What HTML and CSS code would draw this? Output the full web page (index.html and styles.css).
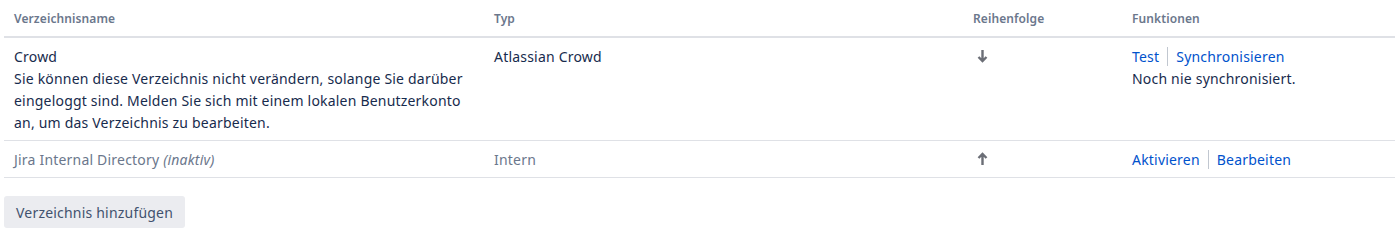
FILE: index.html
```html
<!DOCTYPE html>
<html lang="de">
<head>
	<meta charset="UTF-8">
	<title>Benutzerverzeichnisse</title>
	<link rel="stylesheet" href="styles.css">
</head>
<body>
	<div class="page">
		<table class="dirs">
			<thead>
				<tr>
					<th class="col-name">Verzeichnisname</th>
					<th class="col-type">Typ</th>
					<th class="col-order">Reihenfolge</th>
					<th>Funktionen</th>
				</tr>
			</thead>
			<tbody>
				<tr>
					<td>
						<div>Crowd</div>
						<div>Sie können diese Verzeichnis nicht verändern, solange Sie darüber eingeloggt sind. Melden Sie sich mit einem lokalen Benutzerkonto an, um das Verzeichnis zu bearbeiten.</div>
					</td>
					<td>Atlassian Crowd</td>
					<td>
						<svg class="arrow" width="11" height="14" viewBox="0 0 11 14"><path d="M5.5 1v11M1.5 8l4 4 4-4" fill="none" stroke="#6b6e76" stroke-width="2.4"/></svg>
					</td>
					<td>
						<div class="ops"><a href="#">Test</a><a href="#">Synchronisieren</a></div>
						<div>Noch nie synchronisiert.</div>
					</td>
				</tr>
				<tr class="disabled">
					<td>Jira Internal Directory <em>(inaktiv)</em></td>
					<td>Intern</td>
					<td>
						<svg class="arrow" width="11" height="14" viewBox="0 0 11 14"><path d="M5.5 13V2M1.5 6l4-4 4 4" fill="none" stroke="#6b6e76" stroke-width="2.4"/></svg>
					</td>
					<td>
						<div class="ops"><a href="#">Aktivieren</a><a href="#">Bearbeiten</a></div>
					</td>
				</tr>
			</tbody>
		</table>
		<button class="add-btn">Verzeichnis hinzufügen</button>
	</div>
</body>
</html>
```

FILE: styles.css
```css
* {
	box-sizing: border-box;
}

body {
	margin: 0;
	font-family: "Segoe UI", "Noto Sans", "Open Sans", sans-serif;
	font-size: 14px;
	letter-spacing: 0.2px;
	color: #172b4d;
	background: #fff;
}

.page {
	padding: 0 0 0 4px;
}

.dirs {
	width: 100%;
	border-collapse: collapse;
	table-layout: fixed;
}

.dirs th {
	text-align: left;
	font-size: 12px;
	font-weight: 600;
	letter-spacing: 0.1px;
	color: #6b778c;
	line-height: 22px;
	padding: 8px 10px 6px;
	border-bottom: 2px solid #dfe1e6;
}

.col-name { width: 480px; }
.col-type { width: 479px; }
.col-order { width: 159px; }

.dirs td {
	vertical-align: top;
	line-height: 22px;
	padding: 8px 10px 6px;
	border-bottom: 1px solid #dfe1e6;
}

.disabled td {
	color: #6b778c;
}

.arrow {
	display: block;
	margin: 3px 0 0 4px;
}

.ops a {
	color: #0052cc;
	text-decoration: none;
	padding-right: 8px;
}

.ops a + a {
	border-left: 1px solid #c1c7d0;
	padding-left: 8px;
}

.add-btn {
	margin-top: 18px;
	height: 32px;
	padding: 0 12px;
	border: none;
	border-radius: 3px;
	background: #ebecf0;
	color: #42526e;
	font-family: inherit;
	font-size: 14px;
	letter-spacing: 0.2px;
	cursor: pointer;
}
```
